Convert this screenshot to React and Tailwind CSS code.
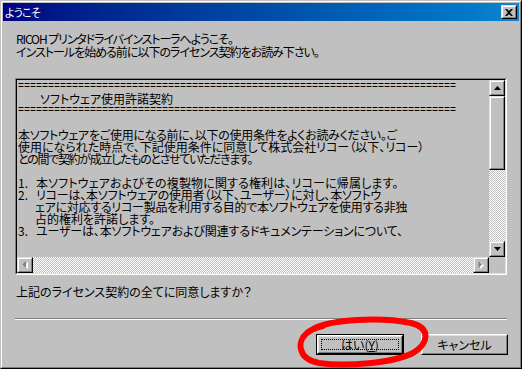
import React from "react";

const JP = "font-['Noto_Sans_CJK_JP',sans-serif] [font-feature-settings:'palt']";
const CHECK = "bg-[image:repeating-conic-gradient(#c0c0c0_0_25%,#ffffff_0_50%)] bg-[length:2px_2px]";

function Raised({ className = "", children }) {
  return (
    <div className={`border border-t-[#dfdfdf] border-l-[#dfdfdf] border-r-black border-b-black ${className}`}>
      <div className="w-full h-full border border-t-white border-l-white border-r-[#808080] border-b-[#808080] bg-[#c0c0c0] flex items-center justify-center">
        {children}
      </div>
    </div>
  );
}

const EQ = "=".repeat(73);

const lines = [
  { eq: true },
  { t: "ソフトウェア使用許諾契約", cls: "pl-[22px]" },
  { eq: true },
  { t: "" },
  { t: "本ソフトウェアをご使用になる前に、以下の使用条件をよくお読みください。ご", cls: "tracking-[-0.3px]" },
  { t: "使用になられた時点で、下記使用条件に同意して株式会社リコー（以下、リコー）", cls: "" },
  { t: "との間で契約が成立したものとさせていただきます。", cls: "tracking-[-1.3px]" },
  { t: "" },
  { n: "1.", t: "本ソフトウェアおよびその複製物に関する権利は、リコーに帰属します。", cls: "tracking-[0.15px]" },
  { n: "2.", t: "リコーは、本ソフトウェアの使用者（以下、ユーザー）に対し、本ソフトウ", cls: "tracking-[-0.2px]" },
  { t: "ェアに対応するリコー製品を利用する目的で本ソフトウェアを使用する非独", cls: "pl-[17px] tracking-[-0.25px]" },
  { t: "占的権利を許諾します。", cls: "pl-[17px]" },
  { n: "3.", t: "ユーザーは、本ソフトウェアおよび関連するドキュメンテーションについて、", cls: "tracking-[-0.15px]" },
];

export default function App() {
  return (
    <div className="relative w-[522px] h-[369px] bg-[#c0c0c0] border border-t-[#c0c0c0] border-l-[#c0c0c0] border-r-black border-b-black overflow-hidden">
      <div className="w-full h-full border border-t-white border-l-white border-r-[#808080] border-b-[#808080] p-px flex flex-col">
        {/* Title bar */}
        <div className="h-[18px] shrink-0 flex items-center justify-between bg-gradient-to-r from-[#000080] to-[#1084d0] pl-[2px] pr-[2px]">
          <span className={`${JP} text-white text-[11px] tracking-[-0.8px] leading-[18px]`}>ようこそ</span>
          <Raised className="w-[16px] h-[14px]">
            <svg width="8" height="7" viewBox="0 0 8 7" className="block">
              <path d="M0 0h2l2 2 2-2h2L5 3.5 8 7H6L4 5 2 7H0l3-3.5z" fill="#000" />
            </svg>
          </Raised>
        </div>

        {/* Body */}
        <div className={`${JP} flex-1 flex flex-col text-black text-[12px]`}>
          <div className="pt-[11px] pl-[13px] leading-[13px]">
            <div className="tracking-[-1.1px]">RICOH プリンタドライバインストーラへようこそ。</div>
            <div className="tracking-[-1px]">インストールを始める前に以下のライセンス契約をお読み下さい。</div>
          </div>

          {/* License box */}
          <div className="mt-[20px] mx-[12px] h-[197px] border border-t-[#808080] border-l-[#808080] border-r-white border-b-white">
            <div className="w-full h-full border border-t-black border-l-black border-r-[#dfdfdf] border-b-[#dfdfdf] grid grid-cols-[1fr_16px] grid-rows-[1fr_16px]">
              <div className="overflow-hidden pl-px pt-px leading-[12px] whitespace-nowrap">
                {lines.map((l, i) =>
                  l.eq ? (
                    <div key={i} className="h-[12px] font-['Liberation_Mono',monospace] text-[10px] leading-[12px]">
                      {EQ}
                    </div>
                  ) : l.n ? (
                    <div key={i} className="h-[12px] flex">
                      <span className="w-[18px] shrink-0">{l.n}</span>
                      <span className={l.cls}>{l.t}</span>
                    </div>
                  ) : (
                    <div key={i} className={`h-[12px] ${l.cls || ""}`}>{l.t}</div>
                  )
                )}
              </div>

              {/* Vertical scrollbar */}
              <div className={`flex flex-col ${CHECK}`}>
                <Raised className="w-[16px] h-[16px] shrink-0">
                  <svg width="7" height="4" viewBox="0 0 7 4" className="block">
                    <path d="M3.5 0L7 4H0z" fill="#000" />
                  </svg>
                </Raised>
                <Raised className="w-[16px] h-[74px] shrink-0" />
                <div className="flex-1" />
                <Raised className="w-[16px] h-[16px] shrink-0">
                  <svg width="7" height="4" viewBox="0 0 7 4" className="block">
                    <path d="M0 0h7L3.5 4z" fill="#000" />
                  </svg>
                </Raised>
              </div>

              {/* Horizontal scrollbar (disabled) */}
              <div className={`flex ${CHECK}`}>
                <Raised className="w-[16px] h-[16px] shrink-0">
                  <svg width="6" height="8" viewBox="0 0 6 8" className="block">
                    <path d="M5 7.5V0.5L1 4z" fill="#ffffff" transform="translate(1 0.5)" />
                    <path d="M4 7V0L0.5 3.5z" fill="#808080" />
                  </svg>
                </Raised>
                <div className="flex-1" />
                <Raised className="w-[16px] h-[16px] shrink-0">
                  <svg width="6" height="8" viewBox="0 0 6 8" className="block">
                    <path d="M1 0.5V7.5L5 4z" fill="#ffffff" transform="translate(1 0.5)" />
                    <path d="M0.5 0V7L4 3.5z" fill="#808080" />
                  </svg>
                </Raised>
              </div>
              <div className="bg-[#c0c0c0]" />
            </div>
          </div>

          <div className="mt-[10px] pl-[13px] leading-[13px]">上記のライセンス契約の全てに同意しますか？</div>

          {/* Separator */}
          <div className="mt-[20px] mx-[12px] border-t border-t-[#808080] border-b border-b-white" />

          {/* Buttons */}
          <div className="mt-[14px] flex justify-end gap-[17px] pr-[11px]">
            <div className="w-[88px] h-[21px] border border-black">
              <div className="w-full h-full border border-t-white border-l-white border-r-black border-b-black">
                <div className="w-full h-full border border-t-[#dfdfdf] border-l-[#dfdfdf] border-r-[#808080] border-b-[#808080] p-[2px]">
                  <div className="w-full h-full border border-dotted border-black flex items-center justify-center leading-none">
                    <span>はい(<span className="underline">Y</span>)</span>
                  </div>
                </div>
              </div>
            </div>
            <div className="w-[87px] h-[21px] border border-t-white border-l-white border-r-black border-b-black">
              <div className="w-full h-full border border-t-[#dfdfdf] border-l-[#dfdfdf] border-r-[#808080] border-b-[#808080] flex items-center justify-center leading-none">
                キャンセル
              </div>
            </div>
          </div>
        </div>
      </div>

      {/* Red hand-drawn circle annotation */}
      <svg className="absolute left-0 top-0 pointer-events-none" width="522" height="369" viewBox="0 0 522 369">
        <path
          d="M312 328 C 330 318, 380 316, 410 322 C 430 327, 428 342, 412 352 C 392 362, 345 366, 318 362 C 296 358, 296 340, 306 332 C 310 329, 316 326, 322 325"
          fill="none"
          stroke="#ff0000"
          strokeWidth="6"
          strokeLinecap="round"
        />
      </svg>
    </div>
  );
}
